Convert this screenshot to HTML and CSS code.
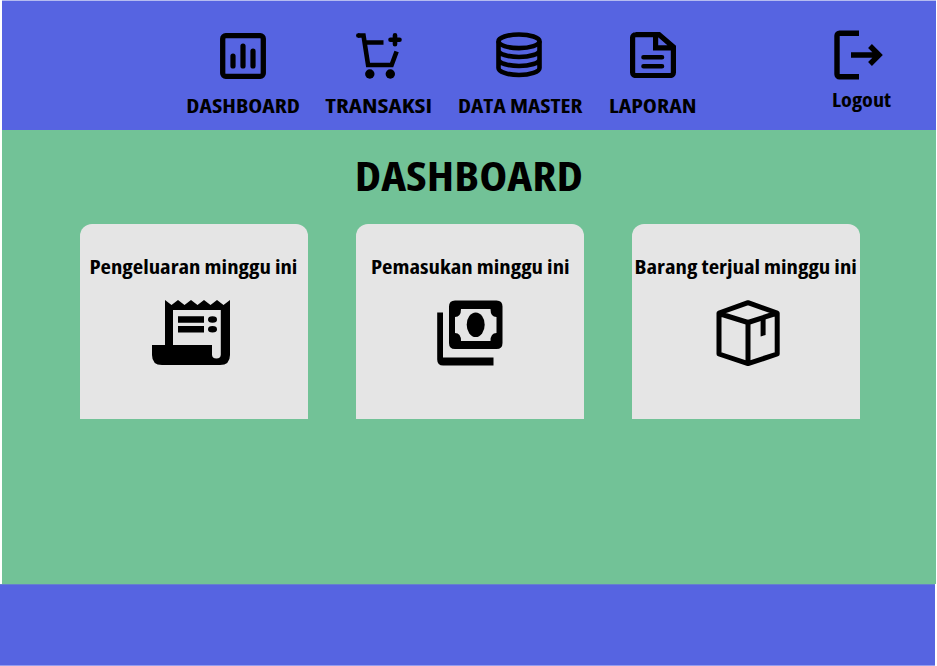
FILE: index.html
```
<!DOCTYPE html>
<html lang="id">
<head>
<meta charset="utf-8">
<title>Dashboard</title>
<link rel="stylesheet" href="styles.css">
</head>
<body>
<header class="topbar">
  <nav class="nav">
    <a class="nav-item dashboard">
      <svg class="icon" viewBox="0 0 46 46"><rect x="2.7" y="2.7" width="40.6" height="40.6" rx="3" fill="none" stroke="#000" stroke-width="5.3"/><path d="M13 23v10M23 13v20M33 18v15" stroke="#000" stroke-width="5.2" stroke-linecap="round"/></svg>
      <span class="label">DASHBOARD</span>
    </a>
    <a class="nav-item transaksi">
      <svg class="icon" viewBox="0 0 46 46"><path d="M2 2.5h5.5l4.6 29.5h23.500l5-13.500M9.500 9.500h18" fill="none" stroke="#000" stroke-width="4.6"/><circle cx="2.300" cy="2.500" r="2.300"/><path d="M39 2.300v9M34.500 6.800h9" stroke="#000" stroke-width="4.600" stroke-linecap="round"/><circle cx="13.800" cy="41" r="4.700"/><circle cx="34.300" cy="41" r="4.700"/></svg>
      <span class="label">TRANSAKSI</span>
    </a>
    <a class="nav-item master">
      <svg class="icon" viewBox="0 0 46 46"><g fill="none" stroke="#000" stroke-width="4.600"><ellipse cx="23" cy="9.300" rx="20.500" ry="6.800"/><path d="M2.500 9.300V36c0 3.800 9.200 7 20.500 7s20.500-3.200 20.500-7V9.300M2.500 18.200c0 3.800 9.200 6.800 20.500 6.800s20.500-3 20.500-6.800M2.500 27.200c0 3.800 9.200 6.800 20.500 6.800s20.500-3 20.500-6.800"/></g></svg>
      <span class="label">DATA MASTER</span>
    </a>
    <a class="nav-item laporan">
      <svg class="icon" viewBox="0 0 46 46"><path d="M5.500 2.600H29L43.400 15V40.500a3 3 0 0 1-3 3H5.600a3 3 0 0 1-3-3V5.600a3 3 0 0 1 3-3zM25.600 2.600V15.800H43" fill="none" stroke="#000" stroke-width="5.200"/><path d="M13.500 25.200h18.500M13.500 34.200h18.500" stroke="#000" stroke-width="4.600" stroke-linecap="round"/></svg>
      <span class="label">LAPORAN</span>
    </a>
  </nav>
  <a class="logout">
    <svg class="logout-icon" viewBox="0 0 50 50"><path d="M25 3.300H5.500a2.500 2.500 0 0 0-2.500 2.500v38.400a2.500 2.500 0 0 0 2.500 2.500H25M17 25h28M36 16l9 9-9 9" fill="none" stroke="#000" stroke-width="5.400"/></svg>
    <span class="label">Logout</span>
  </a>
</header>
<main class="content">
  <h1 class="title">DASHBOARD</h1>
  <div class="cards">
    <section class="card">
      <h2 class="card-title">Pengeluaran minggu ini</h2>
      <svg class="card-icon" viewBox="0 0 80 68"><path fill-rule="evenodd" d="M14 1l6.500 5L27 1l6.500 5L40 1l6.500 5L53 1l6.500 5L66 1l6.500 5L79 1V56q0 10-10 10H11Q1 66 1 56V46H14zM22 11V46H61V55.500q0 4 4.400 4t4.400-4V11z"/><path d="M27 17.300h26v6.500H27zM27 27h26v6.500H27z"/><ellipse cx="61.500" cy="20.500" rx="4.500" ry="3.300"/><ellipse cx="61.500" cy="30.200" rx="4.500" ry="3.300"/></svg>
    </section>
    <section class="card">
      <h2 class="card-title">Pemasukan minggu ini</h2>
      <svg class="card-icon income-icon" viewBox="0 0 80 68"><path fill-rule="evenodd" d="M19 .500H60.500q6 0 6 6V43q0 6-6 6H19q-6 0-6-6V6.500q0-6 6-6zM25 9q0 8-6 8v16q6 0 6 8H54.500q0-8 6-8V17q-6 0-6-8z"/><ellipse cx="39.700" cy="24.800" rx="9" ry="12.300"/><path d="M1.200 12.500H7V57.500H57.500V65.500H7.200q-6 0-6-6z"/></svg>
    </section>
    <section class="card">
      <h2 class="card-title">Barang terjual minggu ini</h2>
      <svg class="card-icon sold-icon" viewBox="0 0 80 68"><g fill="none" stroke="#000" stroke-width="5" stroke-linejoin="round"><path d="M40 2.700L69.200 13V54L40 63.600 11 54V13zM11 13.500L40 22.500 69.200 13M40 22.500V63"/></g><path d="M52.600 19h5v16l-5 1.500z"/></svg>
    </section>
  </div>
</main>
<footer class="footer"></footer>
</body>
</html>
```
FILE: styles.css
```
* { box-sizing: border-box; }
body { margin: 0; width: 937px; height: 666px; overflow: hidden; background: #fff; color: #000; font-family: "Open Sans", "Noto Sans", sans-serif; font-stretch: 80%; font-weight: 700; }
svg { display: block; }
.topbar { display: flex; margin: 0 1px 0 2px; height: 130px; border-top: 1px solid #b5bcf0; background: #5664e1; padding: 32px 0 0 184px; }
.nav { display: flex; gap: 26px; }
.nav-item, .logout { display: flex; flex-direction: column; align-items: center; }
.icon { width: 46px; height: 46px; }
.label { display: block; font-size: 20px; line-height: 24px; white-space: nowrap; }
.nav-item .label { margin-top: 14.500px; }
.dashboard { width: 114px; }
.dashboard .label { transform: scaleX(1.18); }
.transaksi { width: 106px; }
.transaksi .label { transform: scaleX(1.25); }
.master { width: 125px; }
.master .label { transform: scaleX(1.17); }
.laporan { width: 87px; }
.laporan .label { transform: scaleX(1.19); }
.nav-item.master .icon, .nav-item.laporan .icon { margin-top: -1px; margin-bottom: 1px; }
.nav-item.master .icon { margin-right: 4px; }
.logout { width: 60px; margin: -3px 0 0 136px; }
.logout-icon { width: 50px; height: 50px; margin-left: -7px; }
.logout .label { margin-top: 8px; transform: scaleX(1.11); }
.content { margin: 0 1px 0 2px; height: 454px; background: #72c297; padding-top: 18.500px; }
.title { margin: 0 auto; position: static; width: fit-content; height: 50px; line-height: 52px; font-size: 41px; transform: scaleX(1.155); }
.cards { display: flex; gap: 48.700px; margin: 25px 0 0 78px; }
.card { width: 227.500px; height: 195px; background: #e5e5e5; border-radius: 12px 12px 0 0; padding-top: 29.500px; display: flex; flex-direction: column; align-items: center; }
.card-title { margin: 0; font-size: 20px; line-height: 28px; white-space: nowrap; transform: scaleX(1.138); }
.card-icon { width: 80px; height: 68px; margin: 18px 5px 0 0; }
.income-icon { margin: 19px 0 0 13px; }
.sold-icon { margin: 19px 0 0 4px; }
.footer { height: 82px; margin-right: 2px; background: #5664e1; border-top: 1px solid #6580ce; border-bottom: 1px solid #959ded; }
```
